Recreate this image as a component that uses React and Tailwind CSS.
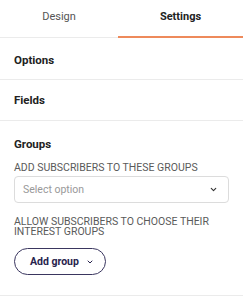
import React from 'react';

const ChevronDown = ({ className }) => (
  <svg className={className} viewBox="0 0 24 24" fill="none" stroke="currentColor" strokeWidth={3} strokeLinecap="round" strokeLinejoin="round">
    <path d="M6 9l6 6 6-6" />
  </svg>
);

const Section = ({ title, className }) => (
  <div className={`flex items-center px-[14px] border-b border-[#ebebeb] ${className}`}>
    <span className="text-[11.5px] font-bold text-[#222]">{title}</span>
  </div>
);

export default function App() {
  return (
    <div className="w-[243px] h-[300px] bg-white overflow-hidden" style={{ fontFamily: 'Roboto, "Noto Sans", sans-serif' }}>
      {/* Tabs */}
      <div className="flex h-[38px] border-b border-[#ebebeb]">
        <button className="w-[118px] flex items-center justify-center pb-[3px] text-[11px] text-[#555]">Design</button>
        <button className="flex-1 relative flex items-center justify-center pb-[3px] text-[11px] font-bold text-[#222]">
          Settings
          <span className="absolute left-0 right-0 bottom-[-1px] h-[2px] bg-[#ee8a5b]"></span>
        </button>
      </div>

      <Section title="Options" className="h-[42px] pt-[5px]" />
      <Section title="Fields" className="h-[41px] pt-[1px]" />

      {/* Groups */}
      <div className="px-[14px] pt-[15px] pb-[20px] border-b border-[#ebebeb]">
        <div className="text-[11.5px] font-bold text-[#222] leading-[16px]">Groups</div>
        <div className="mt-[9px] text-[10.5px] text-[#5a5a5a] leading-[14px] uppercase">Add subscribers to these groups</div>
        <div className="mt-[1px] h-[27px] w-[215px] border border-[#dcdcdc] rounded-[4px] flex items-center justify-between pl-[8px] pr-[10px]">
          <span className="text-[10.5px] text-[#999]">Select option</span>
          <ChevronDown className="w-[9px] h-[9px] text-[#333]" />
        </div>
        <div className="mt-[14px] text-[10.5px] text-[#5a5a5a] leading-[10px] uppercase">Allow subscribers to choose their interest groups</div>
        <button className="mt-[11px] h-[27px] w-[92px] rounded-full border border-[#3a365f] flex items-center pl-[15px] gap-[7px] text-[10.5px] font-bold text-[#27234d]">
          Add group
          <ChevronDown className="w-[8px] h-[8px] text-[#27234d]" />
        </button>
      </div>
    </div>
  );
}
